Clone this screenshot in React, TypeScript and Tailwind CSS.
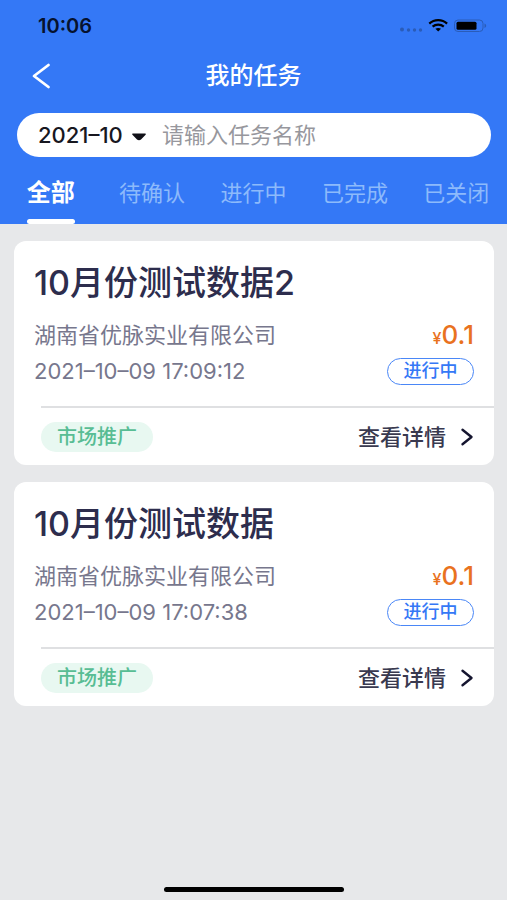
// Task list screen ("我的任务").
// Owns: status bar, nav + search header, status tabs, task cards.

import { useState } from "react"

// ---------------------------------------------------------------------------
// Constants & data
// ---------------------------------------------------------------------------

const TABS = ["全部", "待确认", "进行中", "已完成", "已关闭"]
const MONTHS = ["2021–10", "2021–09", "2021–08"]

type Task = {
  id: number
  title: string
  company: string
  time: string
  price: string
  status: string
  tag: string
}

const TASKS: Task[] = [
  { id: 2, title: "10月份测试数据2", company: "湖南省优脉实业有限公司", time: "2021–10–09 17:09:12", price: "0.1", status: "进行中", tag: "市场推广" },
  { id: 1, title: "10月份测试数据", company: "湖南省优脉实业有限公司", time: "2021–10–09 17:07:38", price: "0.1", status: "进行中", tag: "市场推广" },
]

// ---------------------------------------------------------------------------
// Status bar
// ---------------------------------------------------------------------------

const StatusBar = () => (
  <div className="flex h-[52px] items-center justify-between pr-5 pl-[38px] text-[#06122e]">
    <span className="text-[20px] leading-6 font-semibold">10:06</span>
    <svg width="88" height="16" viewBox="0 0 88 16" aria-hidden>
      <g fill="#2a5cb8">
        <circle cx="3" cy="11.5" r="2" />
        <circle cx="9.5" cy="12" r="1.7" />
        <circle cx="15.5" cy="12" r="1.7" />
        <circle cx="21.5" cy="12" r="1.7" />
      </g>
      <g fill="none" stroke="#000" strokeWidth="2.2">
        <path d="M30.3 5.6C35.2.9 43.2.9 48.1 5.6" />
        <path d="M33.6 8.6c3.1-2.7 8.1-2.7 11.2 0" />
      </g>
      <path d="M36.4 10.8c1.6-1.2 4-1.2 5.6 0L39.2 13.6z" fill="#000" />
      <rect x="55.5" y="2" width="28.5" height="11.5" rx="3.5" fill="none" stroke="#2a5cb8" />
      <rect x="57.5" y="3.7" width="20" height="8" rx="1.5" fill="#000" />
      <path d="M85.5 5.5c2.2.8 2.2 3.7 0 4.5z" fill="#2a5cb8" />
    </svg>
  </div>
)

// ---------------------------------------------------------------------------
// Search bar
// ---------------------------------------------------------------------------

const SearchBar = () => {
  const [month, setMonth] = useState(MONTHS[0])
  const [keyword, setKeyword] = useState("")
  return (
    <div className="mr-4 ml-[17px] flex h-11 items-center rounded-full bg-white pr-5 pl-[21px]">
      <select
        aria-label="月份"
        value={month}
        onChange={(e) => setMonth(e.target.value)}
        className="w-[94px] shrink-0 appearance-none bg-transparent text-[22px] leading-8 font-medium text-[#17171f] outline-none"
      >
        {MONTHS.map((m) => (
          <option key={m}>{m}</option>
        ))}
      </select>
      <svg width="14" height="8" viewBox="0 0 14 8" className="mt-1 shrink-0" aria-hidden>
        <path d="M.8.5h12.4c.7 0 .9.7.4 1.2L9 6.400c-1.100 1-2.900 1-4 0L.4 1.700C-.1 1.200.1.5.8.5z" fill="#101018" />
      </svg>
      <input
        type="text"
        aria-label="任务名称"
        placeholder="请输入任务名称"
        value={keyword}
        onChange={(e) => setKeyword(e.target.value)}
        className="ml-4 h-9 min-w-0 flex-1 bg-transparent text-[22px] leading-9 text-[#17171f] outline-none placeholder:text-[#97979d]"
      />
    </div>
  )
}

// ---------------------------------------------------------------------------
// Task card
// ---------------------------------------------------------------------------

const TaskCard = ({ task }: { task: Task }) => (
  <article className="rounded-xl bg-white">
    <div className="flex h-[165px] flex-col pt-6 pr-5 pl-5">
      <h2 className="text-[34px] leading-9 font-medium text-[#2d2d4d]">{task.title}</h2>
      <div className="mt-4 flex items-center justify-between">
        <p className="text-[22px] leading-9 text-[#77778d]">{task.company}</p>
        <p className="text-[26px] leading-9 font-medium text-[#e9721f]">
          <span className="text-base">¥</span>
          {task.price}
        </p>
      </div>
      <div className="flex items-center justify-between">
        <time className="text-[22px] leading-9 text-[#77778d]">{task.time}</time>
        <span className="flex h-[27px] w-[87px] items-center justify-center rounded-full border border-[#4a87f7] text-[18px] leading-6 font-medium text-[#3578f6]">
          {task.status}
        </span>
      </div>
    </div>
    <div className="ml-[27px] border-t-2 border-[#dfe0e2]" />
    <div className="flex h-[57px] items-center justify-between pr-5 pl-[27px]">
      <span className="flex h-[30px] w-28 items-center justify-center rounded-full bg-[#e8f8f1] text-[20px] leading-7 font-medium text-[#58bd94]">
        {task.tag}
      </span>
      <button type="button" className="flex items-center gap-3.5 text-[22px] leading-8 font-medium text-[#39394f]">
        查看详情
        <svg width="14" height="18" viewBox="0 0 14 18" fill="none" aria-hidden>
          <path d="M2.500 1.800L11.500 9l-9 7.200" stroke="#15152f" strokeWidth="2.400" strokeLinecap="round" strokeLinejoin="round" />
        </svg>
      </button>
    </div>
  </article>
)

// ---------------------------------------------------------------------------
// Screen
// ---------------------------------------------------------------------------

const App = () => {
  const [tab, setTab] = useState(TABS[0])

  return (
    <div className="flex min-h-screen flex-col bg-[#e7e8ea] font-['Inter','Noto_Sans_CJK_SC',sans-serif]">
      <header className="bg-[#3478f6]">
        <StatusBar />
        <div className="grid h-[61px] grid-cols-[60px_1fr_60px] items-center pb-3.5">
          <button type="button" aria-label="返回" className="flex justify-end pr-[9px]">
            <svg width="20" height="28" viewBox="0 0 20 28" fill="none" aria-hidden>
              <path d="M17.500 3L3 14l14.500 11" stroke="#fff" strokeWidth="2.800" strokeLinecap="round" strokeLinejoin="round" />
            </svg>
          </button>
          <h1 className="text-center text-[24px] leading-8 font-medium text-white">我的任务</h1>
        </div>
        <SearchBar />
        <nav className="grid h-[67px] grid-cols-5" role="tablist" aria-label="任务状态">
          {TABS.map((t) => {
            const selected = t === tab
            return (
              <button
                key={t}
                type="button"
                role="tab"
                aria-selected={selected}
                onClick={() => setTab(t)}
                className={[
                  "flex flex-col items-center justify-between pt-5 leading-8 whitespace-nowrap",
                  selected ? "text-[24px] font-bold text-white" : "text-[22px] text-[#8dbafb]",
                ].join(" ")}
              >
                {t}
                {selected && <span className="h-[5px] w-12 rounded-sm bg-white" />}
              </button>
            )
          })}
        </nav>
      </header>

      <main className="flex flex-col gap-[17px] pt-[17px] pr-[13px] pl-3.5">
        {TASKS.map((task) => (
          <TaskCard key={task.id} task={task} />
        ))}
      </main>

      <div className="mt-auto flex justify-center pt-8 pb-2">
        <div className="h-[5px] w-[180px] rounded-full bg-black" />
      </div>
    </div>
  )
}

export default App
